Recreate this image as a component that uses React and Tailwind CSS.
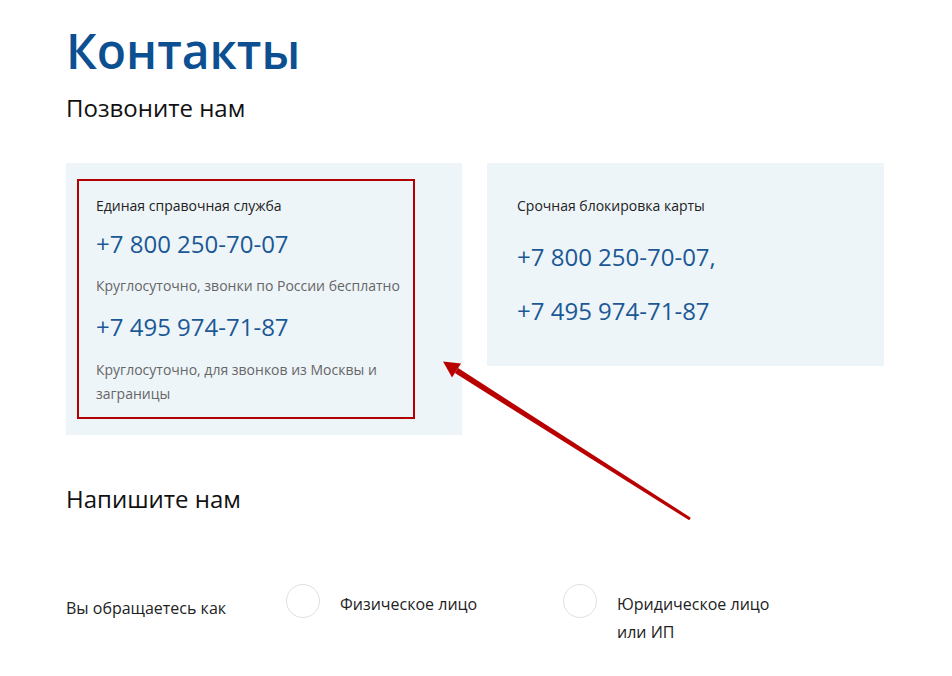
import React from "react";

const font = { fontFamily: '"Open Sans", "Noto Sans", sans-serif' };

function Arrow() {
  // red annotation arrow pointing at the highlighted box
  return (
    <svg className="pointer-events-none absolute left-0 top-0" width="952" height="676" viewBox="0 0 952 676">
      <polygon points="458.1,368.1 690.8,517.7 689.2,520.3 454.9,373.1" fill="#b80000" />
      <polygon points="443,361.5 461,363.6 452,377.5" fill="#b80000" />
    </svg>
  );
}

function Radio({ children, textClass = "" }) {
  return (
    <div className="flex items-start">
      <span className="h-[34px] w-[34px] shrink-0 rounded-full border border-[#e0e0e0] bg-white" />
      <span className={`ml-5 mt-[6px] text-[16px] leading-[28px] text-[#222] ${textClass}`}>{children}</span>
    </div>
  );
}

export default function App() {
  return (
    <div className="relative h-[676px] w-[952px] overflow-hidden bg-white" style={font}>
      <div className="px-[66px] pt-[21px]">
        <h1 className="text-[48px] font-semibold leading-[60px] text-[#0c5091]">Контакты</h1>
        <h2 className="mt-[11px] text-[24px] leading-[32px] text-[#111]">Позвоните нам</h2>

        {/* Phone cards */}
        <div className="mt-[39px] flex items-start gap-[25px]">
          <div className="w-[396px] bg-[#eef5f9] px-[11px] pb-[16px] pt-[16px]">
            <div className="w-[338px] border-2 border-[#b30000] pb-[11px] pl-[17px] pt-[13px]">
              <p className="text-[14px] leading-[24px] text-[#222]">Единая справочная служба</p>
              <p className="mt-[10px] text-[24px] leading-[32px] text-[#1b5895]">+7 800 250-70-07</p>
              <p className="mt-[14px] text-[14px] leading-[24px] text-[#666]">Круглосуточно, звонки по России бесплатно</p>
              <p className="mt-[13px] text-[24px] leading-[32px] text-[#1b5895]">+7 495 974-71-87</p>
              <p className="mt-[15px] w-[300px] text-[14px] leading-[24px] text-[#666]">
                Круглосуточно, для звонков из Москвы и заграницы
              </p>
            </div>
          </div>

          <div className="w-[397px] bg-[#eef5f9] pb-[39px] pl-[30px] pt-[31px]">
            <p className="text-[14px] leading-[24px] text-[#222]">Срочная блокировка карты</p>
            <p className="mt-[23px] text-[24px] leading-[32px] text-[#1b5895]">+7 800 250-70-07,</p>
            <p className="mt-[22px] text-[24px] leading-[32px] text-[#1b5895]">+7 495 974-71-87</p>
          </div>
        </div>

        <h2 className="mt-[48px] text-[24px] leading-[32px] text-[#111]">Напишите нам</h2>

        {/* Form: who is writing */}
        <div className="mt-[69px] flex items-start">
          <span className="mt-[10px] w-[220px] text-[16px] leading-[28px] text-[#222]">Вы обращаетесь как</span>
          <div className="w-[277px]">
            <Radio>Физическое лицо</Radio>
          </div>
          <Radio textClass="w-[165px]">Юридическое лицо или ИП</Radio>
        </div>
      </div>
      <Arrow />
    </div>
  );
}
